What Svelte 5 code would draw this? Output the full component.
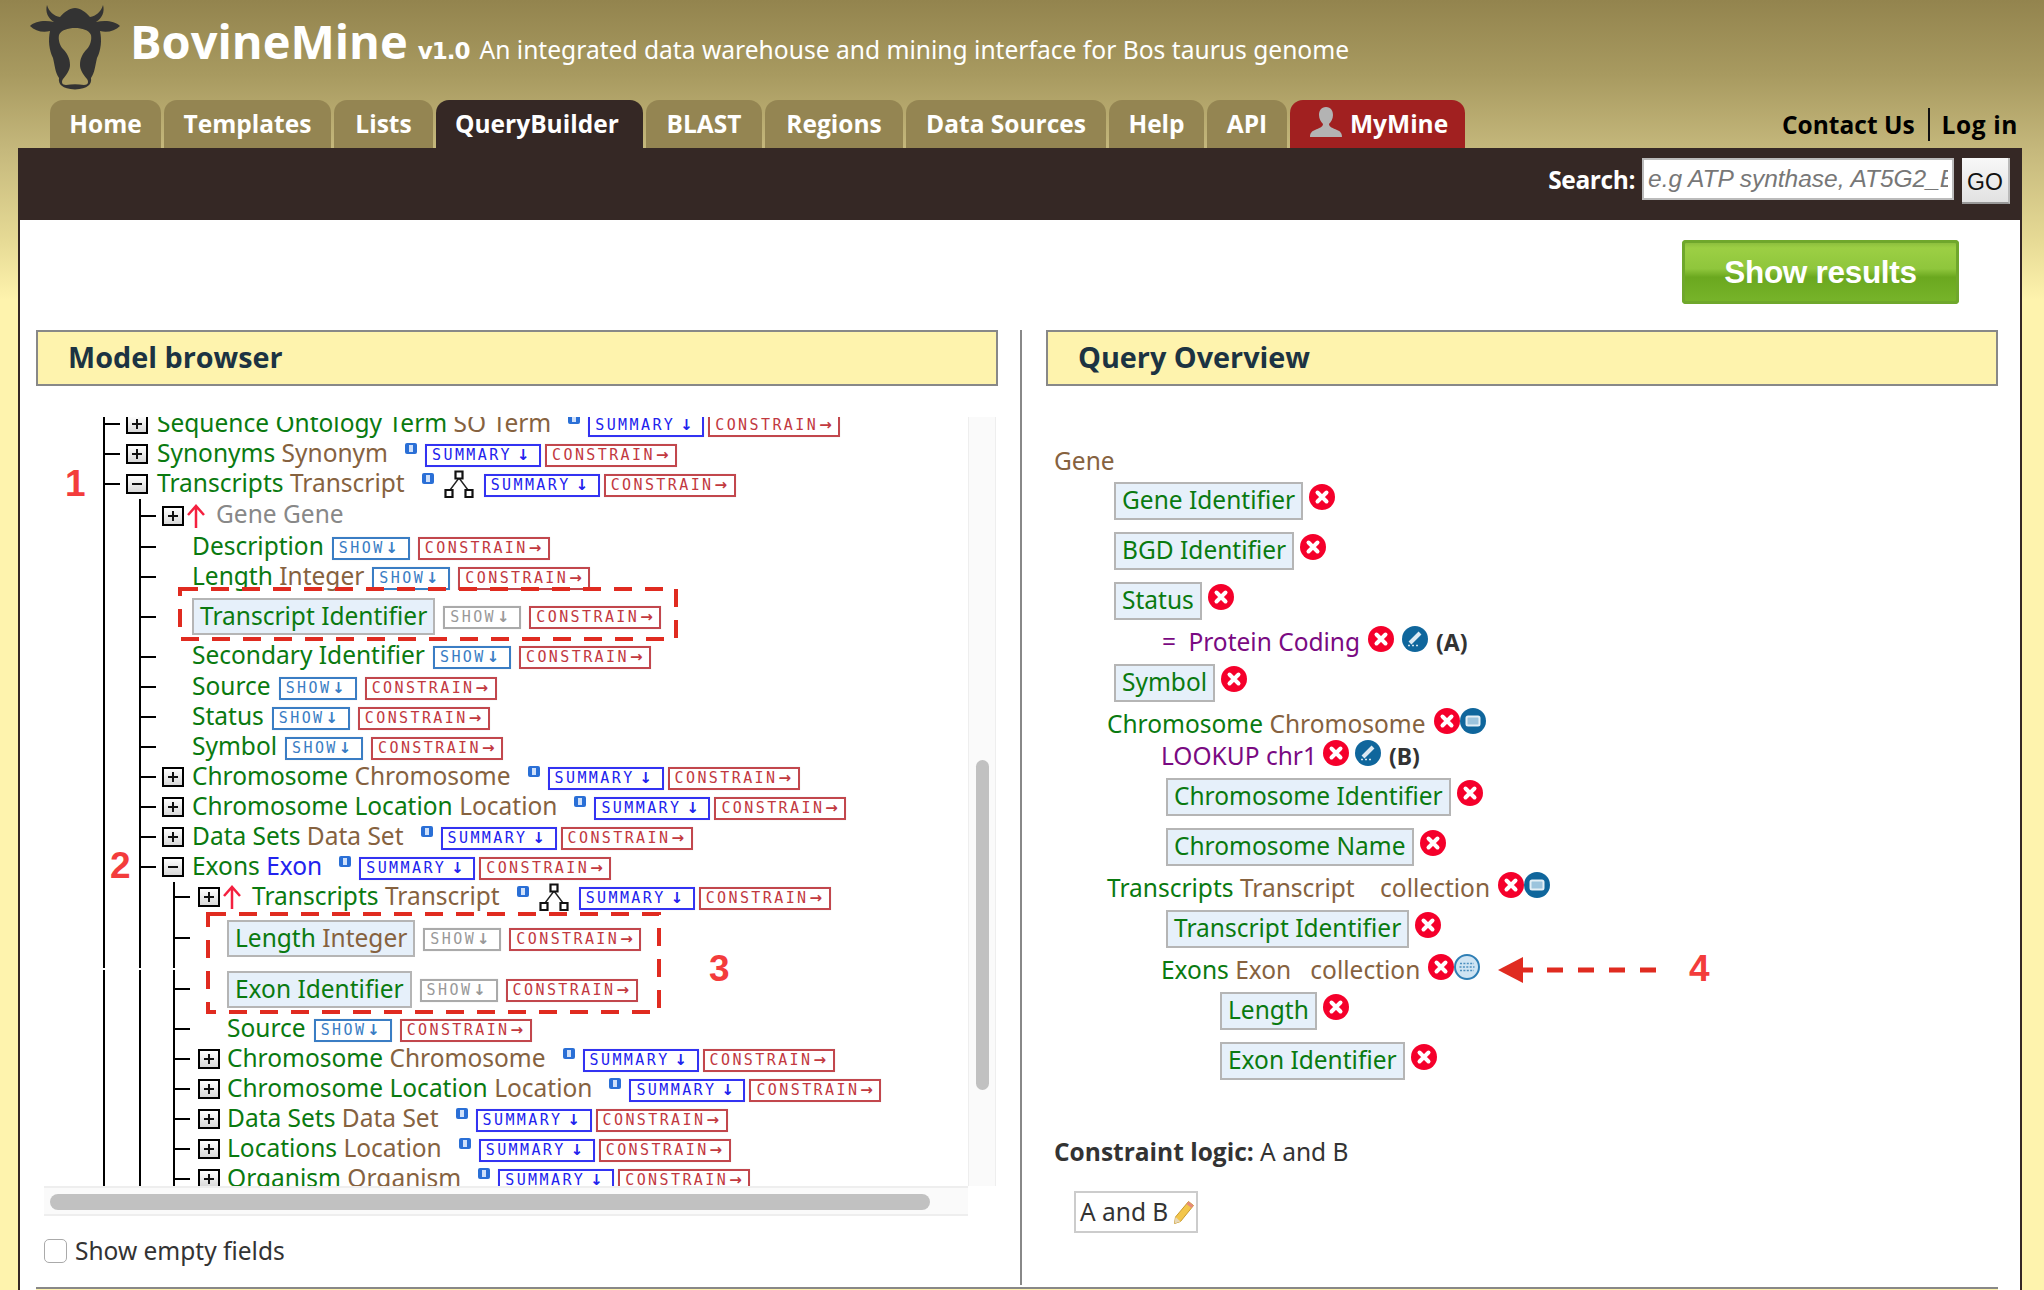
<script>
  const S = 'summary', H = 'show';
  const tree = [
    { d: 0, box: '+', name: 'Sequence Ontology Term', type: 'SO Term', info: 1, tag: S },
    { d: 0, box: '+', name: 'Synonyms', type: 'Synonym', info: 1, tag: S },
    { d: 0, box: '-', name: 'Transcripts', type: 'Transcript', info: 1, net: 1, tag: S },
    { d: 1, box: '+', up: 1, name: 'Gene', type: 'Gene', dim: 1, h: 'h33' },
    { d: 1, name: 'Description', tag: H },
    { d: 1, name: 'Length', type: 'Integer', tag: H },
    { d: 1, name: 'Transcript Identifier', hl: 1, tag: H, off: 1, h: 'h49' },
    { d: 1, name: 'Secondary Identifier', tag: H, h: 'h31' },
    { d: 1, name: 'Source', tag: H },
    { d: 1, name: 'Status', tag: H },
    { d: 1, name: 'Symbol', tag: H },
    { d: 1, box: '+', name: 'Chromosome', type: 'Chromosome', info: 1, tag: S },
    { d: 1, box: '+', name: 'Chromosome Location', type: 'Location', info: 1, tag: S },
    { d: 1, box: '+', name: 'Data Sets', type: 'Data Set', info: 1, tag: S },
    { d: 1, box: '-', name: 'Exons', type: 'Exon', blue: 1, info: 1, tag: S },
    { d: 2, box: '+', up: 1, name: 'Transcripts', type: 'Transcript', info: 1, net: 1, tag: S },
    { d: 2, name: 'Length', type: 'Integer', hl: 1, tag: H, off: 1, h: 'h52' },
    { d: 2, name: 'Exon Identifier', hl: 1, tag: H, off: 1, h: 'h50' },
    { d: 2, name: 'Source', tag: H },
    { d: 2, box: '+', name: 'Chromosome', type: 'Chromosome', info: 1, tag: S },
    { d: 2, box: '+', name: 'Chromosome Location', type: 'Location', info: 1, tag: S },
    { d: 2, box: '+', name: 'Data Sets', type: 'Data Set', info: 1, tag: S },
    { d: 2, box: '+', name: 'Locations', type: 'Location', info: 1, tag: S },
    { d: 2, box: '+', name: 'Organism', type: 'Organism', info: 1, tag: S }
  ];
  const tabs = ['Home', 'Templates', 'Lists', 'QueryBuilder', 'BLAST', 'Regions', 'Data Sources', 'Help', 'API'];
</script>

{#snippet xicon()}
  <svg class="ico" viewBox="0 0 26 26"><circle cx="13" cy="13" r="13" fill="#f5002b" /><path d="M8.500 8.500l9 9M17.500 8.500l-9 9" stroke="#fff" stroke-width="4" stroke-linecap="round" /></svg>
{/snippet}
{#snippet edit()}
  <svg class="ico" viewBox="0 0 26 26"><circle cx="13" cy="13" r="13" fill="#0f669c" /><path d="M8 17l10-10" stroke="#dbe9f2" stroke-width="4" /><path d="M6 19.500h2M10 19.500h2M14 19.500h2" stroke="#cfe2ee" stroke-width="1.600" /></svg>
{/snippet}
{#snippet outer()}
  <svg class="ico" viewBox="0 0 26 26"><circle cx="13" cy="13" r="13" fill="#0f669c" /><rect x="6.500" y="8.500" width="13" height="9" rx="1.500" fill="#9cc4dd" stroke="#e4eff6" stroke-width="2" /></svg>
{/snippet}
{#snippet grid()}
  <svg class="ico" viewBox="0 0 26 26"><circle cx="13" cy="13" r="12" fill="#cfe4f3" stroke="#2f7fb5" stroke-width="2" /><path d="M6 9.500h14M5.500 13h15M6 16.500h14" stroke="#4d8fbe" stroke-width="1.600" stroke-dasharray="2 1.400" /></svg>
{/snippet}

<div class="page">
  <header class="top">
    <svg class="logo" viewBox="0 0 100 95">
      <path fill="#333" fill-rule="evenodd" d="M22 5C24 12 29 16 35 17C39 12 45 8 50 8C55 8 61 12 65 17C71 16 76 12 78 5C80 12 77 18 71 22C80 20 90 21 95 26C90 31 82 33 75 31C77 40 76 50 72 58C70 66 70 72 66 78C67 84 63 89 50 89.500C37 89 33 84 34 78C30 72 30 66 28 58C24 50 23 40 25 31C18 33 10 31 5 26C10 21 20 20 29 22C23 18 20 12 22 5ZM50 28C43 28 36 30 34 35C33 40 35 46 38 49C42 53 45 58 45 65C45 70 42 74 38 79C36 82 37 85 41 85C47 84 53 84 59 85C63 85 64 82 62 79C58 74 55 70 55 65C55 58 58 53 62 49C65 46 67 40 66 35C64 30 57 28 50 28Z" />
    </svg>
    <div class="title">
      <h1>BovineMine</h1>
      <span class="ver">v1.0</span>
      <span class="sub">An integrated data warehouse and mining interface for Bos taurus genome</span>
    </div>
  </header>

  <nav class="nav">
    <div class="tabs">
      {#each tabs as t}
        <a class="tab" class:on={t === 'QueryBuilder'}>{t}</a>
      {/each}
      <a class="tab my">
        <svg class="person" viewBox="0 0 32 30"><path fill="#b3b3b3" d="M16 0c5 0 7 4 7 8s-2 7-4 9c0 3 4 4 8 6 3 1 5 3 5 7H0c0-4 2-6 5-7 4-2 8-3 8-6-2-2-4-5-4-9s2-8 7-8z" /></svg>
        MyMine
      </a>
    </div>
    <div class="links"><a>Contact Us</a><a>Log in</a></div>
  </nav>

  <main class="main">
    <div class="bar">
      <label for="q">Search:</label>
      <input id="q" placeholder="e.g ATP synthase, AT5G2_BOVIN" />
      <button>GO</button>
    </div>
    <div class="actions"><button class="go">Show results</button></div>

    <div class="cols">
      <section class="left">
        <h2>Model browser</h2>
        <div class="browser">
          <div class="view">
            <div class="tree">
              {#each tree as r}
                <div class="row {r.h || ''}">
                  {#if r.d >= 1}<i class="g g0"></i>{/if}
                  {#if r.d >= 2}<i class="g g1"></i>{/if}
                  <i class="tick t{r.d}"></i>
                  <span class="slot s{r.d}" class:auto={r.up}>
                    {#if r.box}
                      <span class="box">{#if r.box === '+'}<b class="v"></b>{/if}<b class="h"></b></span>
                    {/if}
                    {#if r.up}
                      <svg class="up" viewBox="0 0 20 24"><path d="M10 24V3M2 11l8-9 8 9" fill="none" stroke="#f4203f" stroke-width="2.500" /></svg>
                    {/if}
                  </span>
                  <span class="lab" class:hl={r.hl} class:dim={r.dim}>
                    <span class="nm">{r.name}</span>{#if r.type}{' '}<span class="ty" class:blue={r.blue}>{r.type}</span>{/if}
                  </span>
                  {#if r.info}<span class="info"><b></b></span>{/if}
                  {#if r.net}
                    <svg class="net" viewBox="0 0 30 28"><path d="M15 8L6 20M15 8l9 12" stroke="#222" stroke-width="1.400" fill="none" /><path d="M11.500 1.500h7v7h-7zM1.500 20h7v7h-7zM21.500 20h7v7h-7z" fill="#fff" stroke="#111" stroke-width="2.200" /></svg>
                  {/if}
                  {#if r.tag === S}
                    <span class="tag summary">SUMMARY<em>↓</em></span><span class="tag con">CONSTRAIN<em>→</em></span>
                  {:else if r.tag === H}
                    <span class="tag showt" class:off={r.off}>SHOW<em>↓</em></span><span class="tag con wide">CONSTRAIN<em>→</em></span>
                  {/if}
                </div>
              {/each}
            </div>
            <div class="seam"></div>
            <svg class="dash d1" viewBox="0 0 500 54"><rect x="2" y="2" width="496" height="50" fill="none" stroke="#e02b20" stroke-width="4" stroke-dasharray="18 13" /></svg>
            <svg class="dash d3" viewBox="0 0 455 102"><rect x="2" y="2" width="451" height="98" fill="none" stroke="#e02b20" stroke-width="4" stroke-dasharray="18 13" /></svg>
          </div>
          <div class="vtrack"><div class="vthumb"></div></div>
          <div class="htrack"><div class="hthumb"></div></div>
        </div>
        <label class="empty"><span class="chk"></span>Show empty fields</label>
        <span class="num n1">1</span>
        <span class="num n2">2</span>
        <span class="num n3">3</span>
      </section>

      <section class="right">
        <h2>Query Overview</h2>
        <div class="over">
          <div class="q root"><span class="ty">Gene</span></div>
          <div class="q f l1"><span class="fld">Gene Identifier</span>{@render xicon()}</div>
          <div class="q f l1"><span class="fld">BGD Identifier</span>{@render xicon()}</div>
          <div class="q f l1"><span class="fld">Status</span>{@render xicon()}</div>
          <div class="q c1"><span class="pur"><span class="eq">=</span> Protein Coding</span>{@render xicon()}{@render edit()}<b class="cod">(A)</b></div>
          <div class="q f l1"><span class="fld">Symbol</span>{@render xicon()}</div>
          <div class="q j1"><span class="nm">Chromosome</span>&nbsp;<span class="ty">Chromosome</span><span class="pair">{@render xicon()}{@render outer()}</span></div>
          <div class="q c2"><span class="pur">LOOKUP chr1</span>{@render xicon()}{@render edit()}<b class="cod">(B)</b></div>
          <div class="q f l2"><span class="fld">Chromosome Identifier</span>{@render xicon()}</div>
          <div class="q f l2"><span class="fld">Chromosome Name</span>{@render xicon()}</div>
          <div class="q j1"><span class="nm">Transcripts</span>&nbsp;<span class="ty">Transcript&nbsp;&nbsp;&nbsp; collection</span><span class="pair">{@render xicon()}{@render outer()}</span></div>
          <div class="q f l2"><span class="fld">Transcript Identifier</span>{@render xicon()}</div>
          <div class="q j2"><span class="nm">Exons</span>&nbsp;<span class="ty">Exon&nbsp;&nbsp; collection</span><span class="pair">{@render xicon()}{@render grid()}</span></div>
          <div class="q f l3"><span class="fld">Length</span>{@render xicon()}</div>
          <div class="q f l3"><span class="fld">Exon Identifier</span>{@render xicon()}</div>
          <div class="logic"><b>Constraint logic:</b> A and B</div>
          <div class="lbox">A and B
            <svg class="pen" viewBox="0 0 22 24"><path d="M15.500 1.500l5 4-13 16-6 2 1-6.500z" fill="#f3c64a" stroke="#c99a2e" stroke-width="1" /><path d="M15.500 1.500l5 4-2 2.500-5-4z" fill="#e58a7a" /><path d="M2.500 17l5 4.500-6 2z" fill="#e8d8b8" /></svg>
          </div>
        </div>
        <svg class="ptr" viewBox="0 0 160 26"><path d="M0 13L25 0v26z" fill="#e02b20" /><path d="M25 13h10" stroke="#e02b20" stroke-width="5" /><path d="M49 13h111" stroke="#e02b20" stroke-width="5" stroke-dasharray="16 15" /></svg>
        <span class="num n4">4</span>
      </section>
    </div>
    <div class="foot"></div>
  </main>
</div>

<style>
  :global(body) { margin: 0; background: #fef3ad; overflow: hidden; }
  .page {
    height: 1290px; overflow: hidden;
    font-family: "Noto Sans", sans-serif; color: #333;
    background: linear-gradient(#93844e 0, #a89a60 75px, #c5b87c 150px, #e6da95 240px, #fef3ad 300px);
  }
  .top { height: 100px; display: flex; align-items: flex-start; padding-left: 25px; box-sizing: border-box; }
  .logo { width: 100px; height: 95px; flex: none; }
  .title { display: flex; align-items: baseline; margin-left: 5px; padding-top: 11px; }
  h1 { margin: 0; font: 700 47px/60px "Open Sans", sans-serif; color: #fff; }
  .ver { margin-left: 10px; font: 700 23px "DejaVu Sans", sans-serif; letter-spacing: -1px; color: #fff; }
  .sub { margin-left: 10px; font-size: 24.600px; color: #fff; }

  .nav { height: 48px; display: flex; justify-content: space-between; padding: 0 26px 0 50px; }
  .tabs { display: flex; gap: 3px; }
  .tab {
    height: 48px; box-sizing: border-box; padding-top: 6px; text-align: center; background: #948552;
    border-radius: 13px 13px 0 0; color: #fff;
    font: 700 24.500px/36px "Open Sans", sans-serif;
  }
  .tab:nth-child(1) { width: 111px; }
  .tab:nth-child(2) { width: 167px; }
  .tab:nth-child(3) { width: 99px; }
  .tab:nth-child(4) { width: 207px; text-align: left; padding-left: 19px; }
  .tab:nth-child(5) { width: 116px; }
  .tab:nth-child(6) { width: 138px; }
  .tab:nth-child(7) { width: 200px; }
  .tab:nth-child(8) { width: 95px; }
  .tab:nth-child(9) { width: 80px; }
  .tab.on { background: #352825; }
  .tab.my { width: 175px; background: #a12020; padding-left: 20px; display: flex; gap: 8px; }
  .person { width: 32px; height: 30px; margin-top: 1px; }
  .links { display: flex; align-items: center; height: 30px; margin-top: 9px; font: 700 24.500px "Open Sans", sans-serif; color: #000; }
  .links a + a { border-left: 2px solid #111; margin-left: 13px; padding-left: 12px; letter-spacing: .6px; }

  .main { margin: 0 22px 0 18px; height: 1142px; box-sizing: border-box; background: #fff; border-left: 2px solid #352825; border-right: 2px solid #352825; position: relative; overflow: hidden; }
  .bar { height: 72px; margin: 0 -2px; background: #352825; display: flex; align-items: flex-start; justify-content: flex-end; padding: 10px 12px 0 0; box-sizing: border-box; }
  .bar label { font: 700 24.500px/44px "Open Sans", sans-serif; color: #fff; margin-right: 7px; letter-spacing: -.4px; }
  .bar input { width: 312px; height: 42px; box-sizing: border-box; border: 2px solid #bbb; background: #fff; padding: 0 4px; font: italic 24.500px "Liberation Sans", sans-serif; color: #555; }
  .bar input::placeholder { color: #777; opacity: 1; }
  .bar button { width: 48px; height: 46px; margin-left: 8px; border: 0; border-bottom: 2px solid #999; border-right: 2px solid #bbb; background: linear-gradient(#f8f8f8, #e2e2e2); font: 23px "Liberation Sans", sans-serif; color: #111; padding: 4px 0 0; }

  .actions { height: 110px; display: flex; justify-content: flex-end; padding: 20px 61px 0 0; box-sizing: border-box; }
  .go { width: 277px; height: 64px; border: 0; border-radius: 4px; color: #fff; font: 700 31.500px "Liberation Sans", sans-serif; letter-spacing: -.3px; background: linear-gradient(#83b53a 0, #9ccf44 8px, #8fc63c 45%, #6ba81f 58%, #78b52b 100%); box-shadow: inset 0 0 0 3px #6fa72c; }

  .cols { display: flex; padding-left: 16px; height: 955px; }
  .left { width: 962px; position: relative; flex: none; }
  .right { width: 978px; flex: none; margin-left: 22px; border-left: 2px solid #888; padding-left: 24px; box-sizing: border-box; position: relative; height: 955px; }
  h2 { margin: 0; height: 56px; box-sizing: border-box; border: 2px solid #888; background: #fef3ad; padding-left: 30px; color: #1c3342; font: 700 28.800px/50px "Open Sans", sans-serif; }
  .right h2 { width: 952px; }

  .browser { position: relative; margin-top: 31px; margin-left: 8px; width: 952px; height: 799px; }
  .view { position: absolute; left: 0; top: 0; width: 924px; height: 769px; overflow: hidden; }
  .tree { margin-top: -8px; }
  .row { display: flex; align-items: center; height: 30px; padding-left: 59px; position: relative; white-space: nowrap; font-size: 24.500px; }
  .h33 { height: 33px; } .h31 { height: 31px; } .h49 { height: 49px; } .h52 { height: 52px; } .h50 { height: 50px; }
  .g { align-self: stretch; border-left: 2px solid #000; box-sizing: border-box; flex: none; }
  .g0 { width: 36px; } .g1 { width: 34px; }
  .tick { align-self: stretch; flex: none; border-left: 2px solid #000; box-sizing: border-box; position: relative; width: 23px; }
  .t2 { width: 25px; }
  .tick::after { content: ""; position: absolute; left: 0; top: 50%; width: 15px; height: 2px; margin-top: -1px; background: #000; }
  .slot { flex: none; display: flex; align-items: center; }
  .s0 { width: 31px; } .s1 { width: 30px; } .s2 { width: 29px; }
  .slot.auto { width: auto; }
  .box { width: 22px; height: 20px; box-sizing: border-box; border: 2px solid #000; position: relative; background: linear-gradient(#fff, #d8d8d8); flex: none; }
  .box .h { position: absolute; left: 4px; right: 4px; top: 7px; height: 2px; background: #111; }
  .box .v { position: absolute; top: 3px; bottom: 3px; left: 8px; width: 2px; background: #111; }
  .up { width: 20px; height: 24px; margin: 0 10px 0 2px; flex: none; }
  .lab { line-height: 28px; flex: none; margin-top: -3px; }
  .nm, .fld { color: #0a7a10; }
  .ty { color: #86623f; }
  .ty.blue { color: #2222ee; }
  .dim .nm, .dim .ty { color: #888; }
  .hl { height: 37px; line-height: 31px; box-sizing: border-box; padding: 0 6px; background: #e6f0fa; border: 2px solid #b5b5b5; margin-top: 0; }
  .info { width: 12px; height: 11px; margin: -11px 8px 0 17px; border-radius: 2px; background: #2a6fd6; position: relative; flex: none; }
  .info b { position: absolute; left: 4px; top: 2px; width: 4px; height: 7px; background: #cfe0fa; }
  .net { width: 30px; height: 28px; flex: none; margin: 0 10px 0 2px; }
  .tag { height: 23px; box-sizing: border-box; border: 2px solid; display: flex; align-items: center; padding-left: 5px; flex: none; margin-top: 2px; font: 15px/1 "DejaVu Sans Mono", monospace; letter-spacing: 2.400px; box-shadow: 0 0 1px rgba(0,0,0,.15); }
  .tag em { font: 700 15px/1 "DejaVu Sans", sans-serif; letter-spacing: 0; margin-left: 1px; }
  .summary { width: 116px; color: #2222ee; border-color: #3333f2; margin-right: 4px; }
  .summary em { margin-left: 5px; }
  .showt { width: 78px; color: #3a7dc4; border-color: #3a7dc4; margin-left: 8px; margin-right: 8px; }
  .showt.off { color: #999; border-color: #aaa; }
  .con { width: 132px; color: #c2393f; border-color: #c2474d; }

  .seam { position: absolute; left: 55px; top: 551px; width: 90px; height: 2px; background: #fff; }
  .dash { position: absolute; }
  .d1 { left: 134px; top: 170px; width: 500px; height: 54px; }
  .d3 { left: 162px; top: 495px; width: 455px; height: 102px; }

  .vtrack { position: absolute; left: 924px; top: 0; width: 28px; height: 769px; background: #fafafa; border-left: 1px solid #eee; border-right: 1px solid #eee; box-sizing: border-box; }
  .vthumb { position: absolute; left: 7px; width: 13px; top: 343px; height: 330px; border-radius: 7px; background: #c1c1c1; }
  .htrack { position: absolute; left: 0; top: 769px; width: 924px; height: 30px; background: #fafafa; border-top: 2px solid #eee; border-bottom: 2px solid #eee; box-sizing: border-box; }
  .hthumb { position: absolute; left: 6px; top: 6px; height: 16px; width: 880px; border-radius: 8px; background: #c1c1c1; }

  .empty { display: flex; align-items: center; margin: 20px 0 0 8px; font-size: 24.500px; line-height: 30px; color: #333; }
  .chk { width: 23px; height: 24px; box-sizing: border-box; border: 1px solid #aaa; border-radius: 5px; background: #fff; margin-right: 8px; }
  .num { position: absolute; font: 700 37px/1 "Liberation Sans", sans-serif; color: #f33c3c; }
  .n1 { left: 29px; top: 135px; }
  .n2 { left: 74px; top: 517px; }
  .n3 { left: 673px; top: 620px; }
  .n4 { left: 667px; top: 620px; }
  .ptr { position: absolute; left: 476px; top: 627px; width: 160px; height: 26px; }

  .over { font-size: 24.500px; }
  .q { display: flex; align-items: flex-start; white-space: nowrap; line-height: 28px; }
  .root { margin: 61px 0 0 8px; height: 35px; }
  .f { height: 50px; }
  .l1 { margin-left: 68px; } .l2 { margin-left: 120px; } .l3 { margin-left: 174px; }
  .f:has(+ .c1) { height: 44px; }
  .f:has(+ .j1), .f:has(+ .j2) { height: 46px; }
  .fld { height: 38px; line-height: 32px; box-sizing: border-box; padding: 0 6px; background: #e6f0fa; border: 2px solid #b5b5b5; }
  .ico { width: 26px; height: 26px; flex: none; }
  .f .ico { margin: 2px 0 0 6px; }
  .c1 { margin-left: 116px; height: 38px; }
  .pur { color: #7a0a82; margin-top: 2px; }
  .eq { margin-right: 6px; }
  .c1 .ico { margin-left: 8px; } .c2 .ico { margin-left: 6px; }
  .cod { font-size: 23px; font-weight: 700; margin: 2px 0 0 8px; color: #333; }
  .j1 { margin-left: 61px; height: 30px; }
  .j1:has(+ .f) { height: 36px; }
  .j2 { margin-left: 115px; height: 36px; }
  .pair { display: flex; margin-left: 8px; margin-top: -2px; }
  .c2 { margin-left: 115px; height: 38px; }
  .logic { margin: 43px 0 0 8px; line-height: 30px; }
  .logic b { font: 700 24.500px "Open Sans", sans-serif; }
  .lbox { margin: 23px 0 0 28px; width: 124px; height: 42px; box-sizing: border-box; border: 2px solid #ccc; padding: 0 0 0 4px; line-height: 36px; display: flex; align-items: center; justify-content: space-between; white-space: nowrap; }
  .pen { width: 22px; height: 24px; margin-right: 1px; }

  .foot { position: absolute; left: 16px; top: 1139px; width: 1962px; height: 40px; box-sizing: border-box; border-top: 2px solid #888; background: #fef3ad; }
</style>
